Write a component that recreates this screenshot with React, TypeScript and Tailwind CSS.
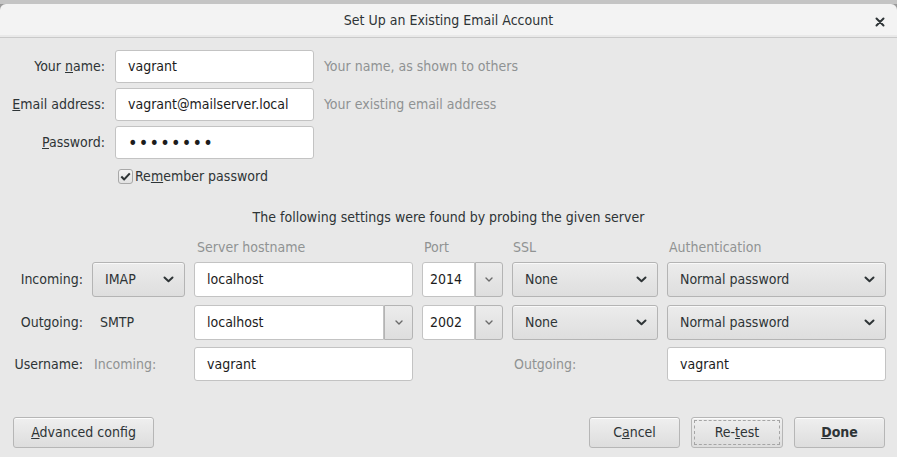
import type { ReactNode } from 'react'

const FONT = "font-['DejaVu_Sans_Condensed','DejaVu_Sans',sans-serif]"

function Chevron({ small = false }: { small?: boolean }) {
  if (small) {
    return (
      <svg width="8" height="5" viewBox="0 0 8 5" fill="none" aria-hidden="true">
        <path d="M1 1 L4 4 L7 1" stroke="#6b6b6b" strokeWidth="1.4" strokeLinecap="round" strokeLinejoin="round" />
      </svg>
    )
  }
  return (
    <svg width="11" height="7" viewBox="0 0 11 7" fill="none" aria-hidden="true">
      <path d="M1.5 1.5 L5.5 5.2 L9.5 1.5" stroke="#2e3436" strokeWidth="2" strokeLinecap="round" strokeLinejoin="round" />
    </svg>
  )
}

function Field({ children, className = '' }: { children: ReactNode; className?: string }) {
  return (
    <div
      className={`flex items-center rounded-[3px] border border-[#c3c3c3] bg-white px-[12px] text-[14px] text-[#1c1c1c] ${className}`}
    >
      {children}
    </div>
  )
}

function Select({ label, className = '' }: { label: string; className?: string }) {
  return (
    <div
      className={`flex items-center justify-between rounded-[3px] border border-[#b4b4b4] bg-gradient-to-b from-[#ececec] to-[#dedede] pl-[12px] pr-[10px] text-[14px] text-[#2e3436] shadow-[inset_0_1px_0_rgba(255,255,255,0.7)] ${className}`}
    >
      <span>{label}</span>
      <Chevron />
    </div>
  )
}

function DropButton({ className = '' }: { className?: string }) {
  return (
    <div
      className={`flex items-center justify-center rounded-r-[3px] border border-[#b4b4b4] bg-gradient-to-b from-[#ececec] to-[#dedede] ${className}`}
    >
      <Chevron small />
    </div>
  )
}

function Button({ children, className = '' }: { children: ReactNode; className?: string }) {
  return (
    <div
      className={`flex h-[31px] items-center justify-center rounded-[3px] border border-[#b6b6b6] bg-gradient-to-b from-[#efefef] to-[#dddddd] text-[14px] text-[#2e3436] shadow-[inset_0_1px_0_rgba(255,255,255,0.8)] ${className}`}
    >
      {children}
    </div>
  )
}

export default function App() {
  return (
    <div className={`flex h-[457px] w-[897px] flex-col overflow-hidden bg-[#9a9a9a] ${FONT}`}>
      {/* window behind, peeking out */}
      <div className="flex h-[4px] shrink-0 bg-[#c4c4c4]">
        <div className="ml-[28px] w-[1px] bg-[#8c8c8c]" />
        <div className="ml-[12px] w-[1px] bg-[#8c8c8c]" />
        <div className="ml-[127px] w-[1px] bg-[#8c8c8c]" />
        <div className="ml-[4px] w-[1px] bg-[#8c8c8c]" />
        <div className="ml-[826px] w-[1px] bg-[#8c8c8c]" />
      </div>

      {/* title bar */}
      <div className="relative flex h-[34px] shrink-0 items-center justify-center rounded-t-[6px] border-b border-[#c9c9c9] bg-[#f3f3f3] shadow-[inset_0_-2px_0_#e9e9e9]">
        <span className="text-[14px] text-[#2e3436]">Set Up an Existing Email Account</span>
        <svg className="absolute right-[12px] top-[13px]" width="10" height="10" viewBox="0 0 10 10" aria-hidden="true">
          <path d="M1.5 1.5 L8.5 8.5 M8.5 1.5 L1.5 8.5" stroke="#2e3436" strokeWidth="2" strokeLinecap="round" />
        </svg>
      </div>

      {/* body */}
      <div className="flex flex-1 flex-col bg-[#e8e8e8] pt-[12px] text-[14px] text-[#2e3436]">
        {/* identity */}
        <div className="flex flex-col gap-[5px]">
          <div className="flex items-center">
            <span className="w-[105px] text-right">
              Your <u>n</u>ame:
            </span>
            <Field className="ml-[10px] h-[33px] w-[199px]">vagrant</Field>
            <span className="ml-[10px] text-[#8f9293]">Your name, as shown to others</span>
          </div>
          <div className="flex items-center">
            <span className="w-[105px] text-right">
              <u>E</u>mail address:
            </span>
            <Field className="ml-[10px] h-[33px] w-[199px]">vagrant@mailserver.local</Field>
            <span className="ml-[10px] text-[#8f9293]">Your existing email address</span>
          </div>
          <div className="flex items-center">
            <span className="w-[105px] text-right">
              <u>P</u>assword:
            </span>
            <Field className="ml-[10px] h-[33px] w-[199px]">
              <span className="text-[18px] leading-none tracking-[1.2px]">••••••••</span>
            </Field>
          </div>
        </div>

        <div className="ml-[118px] mt-[10px] flex h-[15px] items-center">
          <span className="flex h-[15px] w-[15px] items-center justify-center rounded-[3px] border border-[#a8a8a8] bg-gradient-to-b from-[#f4f4f4] to-[#e2e2e2]">
            <svg width="11" height="9" viewBox="0 0 11 9" aria-hidden="true">
              <path d="M1.3 4.6 L4.2 7.4 L9.8 1.4" fill="none" stroke="#2e3436" strokeWidth="2.1" strokeLinejoin="round" />
            </svg>
          </span>
          <span className="ml-[2px]">
            Re<u>m</u>ember password
          </span>
        </div>

        <p className="mt-[23px] text-center">The following settings were found by probing the given server</p>

        {/* server settings */}
        <div className="mt-[9px] grid grid-cols-[83px_93px_219px_81px_146px_219px] gap-x-[9px]">
          <span />
          <span />
          <span className="pl-[3px] text-[#909393]">Server hostname</span>
          <span className="pl-[2px] text-[#909393]">Port</span>
          <span className="pl-[1px] text-[#909393]">SSL</span>
          <span className="pl-[2px] text-[#909393]">Authentication</span>

          {/* incoming */}
          <span className="mt-[4px] flex h-[35px] items-center justify-end">Incoming:</span>
          <Select label="IMAP" className="mt-[4px] h-[35px]" />
          <Field className="mt-[4px] h-[35px]">localhost</Field>
          <div className="mt-[4px] flex h-[35px]">
            <Field className="w-[53px] justify-end rounded-r-none px-[5px]">2014</Field>
            <DropButton className="flex-1" />
          </div>
          <Select label="None" className="mt-[4px] h-[35px]" />
          <Select label="Normal password" className="mt-[4px] h-[35px]" />

          {/* outgoing */}
          <span className="mt-[8px] flex h-[35px] items-center justify-end">Outgoing:</span>
          <span className="mt-[8px] flex h-[35px] items-center pl-[8px]">SMTP</span>
          <div className="mt-[8px] flex h-[35px]">
            <Field className="flex-1 rounded-r-none">localhost</Field>
            <DropButton className="w-[29px]" />
          </div>
          <div className="mt-[8px] flex h-[35px]">
            <Field className="w-[53px] justify-end rounded-r-none px-[5px]">2002</Field>
            <DropButton className="flex-1" />
          </div>
          <Select label="None" className="mt-[8px] h-[35px]" />
          <Select label="Normal password" className="mt-[8px] h-[35px]" />

          {/* usernames */}
          <span className="mt-[7px] flex h-[34px] items-center justify-end">Username:</span>
          <span className="mt-[7px] flex h-[34px] items-center pl-[2px] text-[#909393]">Incoming:</span>
          <Field className="mt-[7px] h-[34px]">vagrant</Field>
          <span className="mt-[7px]" />
          <span className="mt-[7px] flex h-[34px] items-center pl-[2px] text-[#909393]">Outgoing:</span>
          <Field className="mt-[7px] h-[34px]">vagrant</Field>
        </div>

        {/* actions */}
        <div className="mt-auto flex items-center pb-[9px] pl-[13px] pr-[12px]">
          <Button className="w-[141px]">
            <span>
              <u>A</u>dvanced config
            </span>
          </Button>
          <div className="ml-auto flex gap-[11px]">
            <Button className="w-[91px]">
              <span>
                C<u>a</u>ncel
              </span>
            </Button>
            <Button className="w-[92px] p-[2px]">
              <span className="flex h-full w-full items-center justify-center border border-dashed border-[#a5a5a5]">
                Re-<u>t</u>est
              </span>
            </Button>
            <Button className="w-[91px] font-bold">
              <span>
                <u>D</u>one
              </span>
            </Button>
          </div>
        </div>
      </div>
    </div>
  )
}
